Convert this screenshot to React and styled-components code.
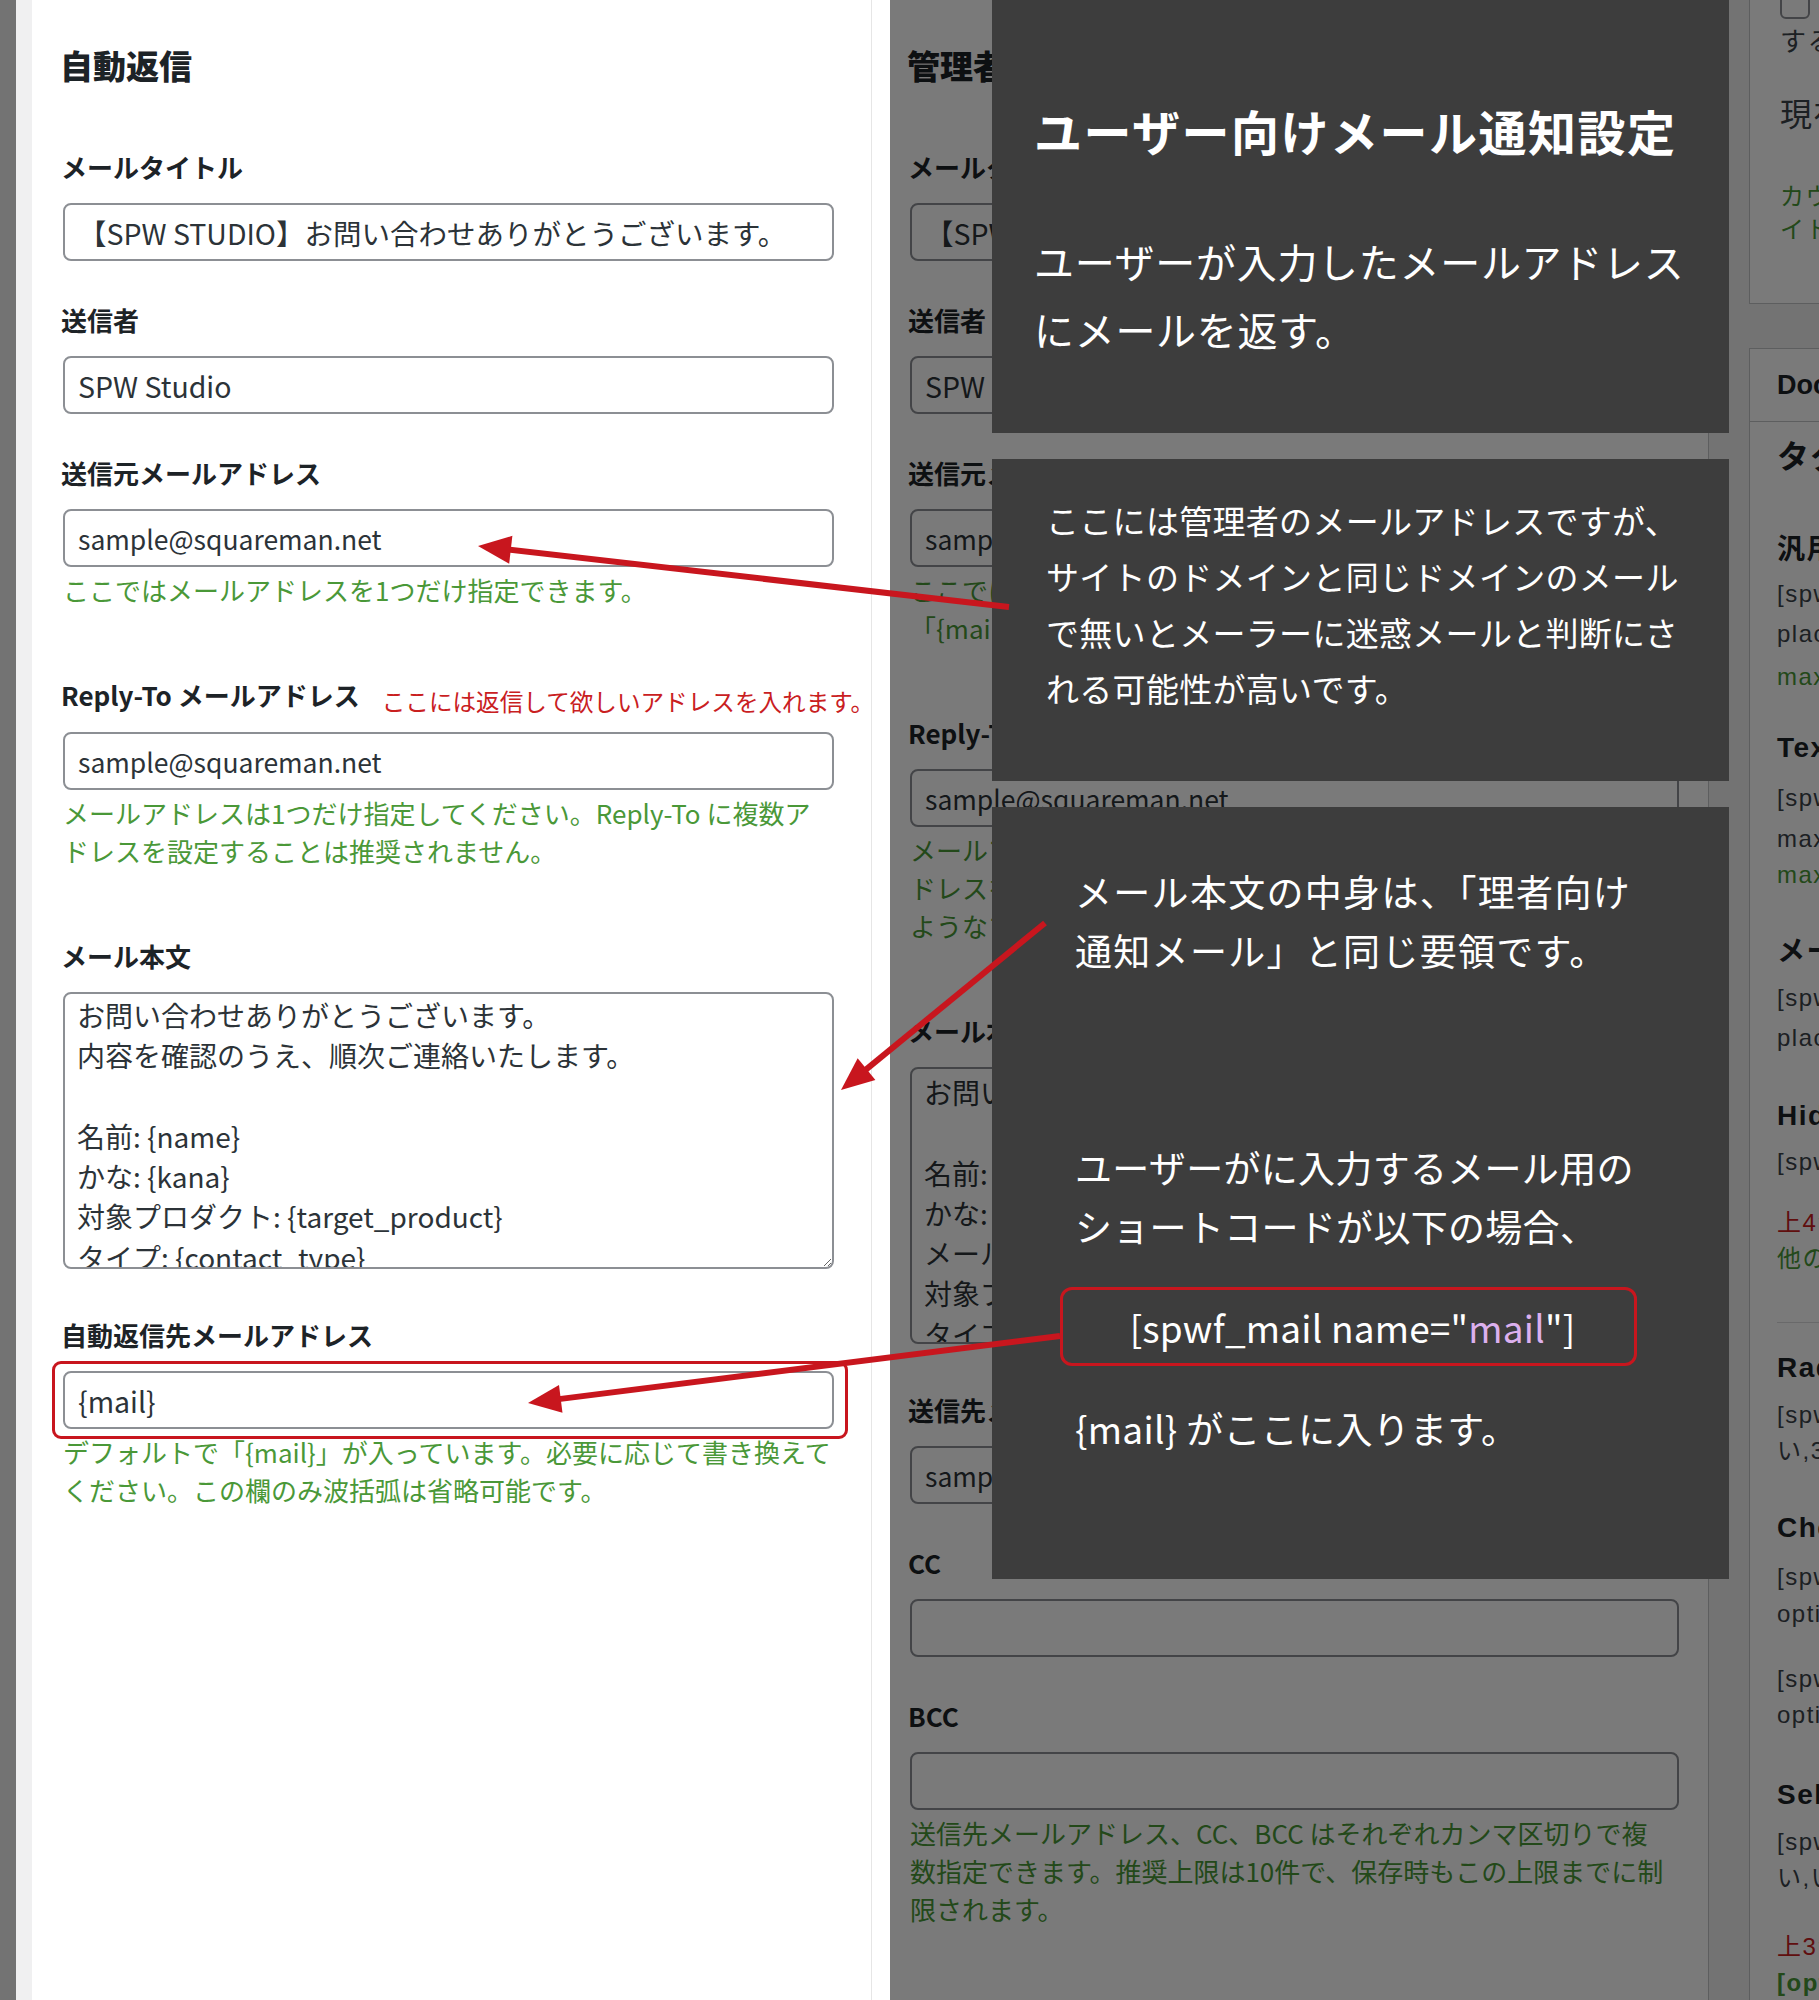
import styled, { createGlobalStyle } from 'styled-components';

const GlobalStyle = createGlobalStyle`
  html, body {
    margin: 0;
    padding: 0;
  }
  body {
    font-family: "Noto Sans CJK JP", "Noto Sans", sans-serif;
    color: #1d2327;
  }
`;

const RED = '#c8161e';
const GREEN = '#4a9838';

const Page = styled.div`
  position: relative;
  width: 1819px;
  height: 2000px;
  overflow: hidden;
  background: #f0f0f1;
  display: flex;
  padding-left: 32px;
  box-sizing: border-box;
`;

const Postbox = styled.div`
  display: flex;
  flex-shrink: 0;
  background: #fff;
  border-right: 1px solid #c3c4c7;
`;

const Column = styled.div`
  box-sizing: border-box;
  width: ${props => props.$width}px;
  padding: 41px ${props => props.$pr}px 0 ${props => props.$pl}px;
  border-right: ${props => (props.$divider ? '1px solid #e6e6e6' : 'none')};
`;

const SectionTitle = styled.h2`
  margin: 0 0 60px -3px;
  font-size: 33px;
  line-height: 48px;
  font-weight: 800;
  color: #1d2327;
`;

const Field = styled.div`
  padding-bottom: 41px;
`;

const LabelRow = styled.div`
  display: flex;
  align-items: baseline;
  gap: 22px;
  margin: 0 0 18px -2px;
`;

const Label = styled.label`
  display: block;
  font-size: 26px;
  line-height: 36px;
  font-weight: 700;
  color: #1d2327;
  white-space: nowrap;
`;

const InlineAlert = styled.span`
  position: relative;
  top: 5px;
  font-size: 23.6px;
  line-height: 36px;
  color: #c9201f;
  white-space: nowrap;
`;

const TextInput = styled.input`
  display: block;
  width: 100%;
  height: 58px;
  box-sizing: border-box;
  padding: 0 13px;
  border: 2px solid #8c8f94;
  border-radius: 8px;
  background: #fff;
  color: #2c3338;
  font-family: inherit;
  font-size: ${props => props.$size || 28.5}px;
  outline: none;
`;

const TextArea = styled.textarea`
  display: block;
  width: 100%;
  height: 277px;
  box-sizing: border-box;
  margin: 0 0 7px;
  padding: ${props => props.$pt || 1}px 12px 0;
  border: 2px solid #8c8f94;
  border-radius: 8px;
  background: #fff;
  color: #2c3338;
  font-family: inherit;
  font-size: 28px;
  line-height: 40.3px;
  overflow: hidden;
  resize: vertical;
  outline: none;
`;

const Note = styled.p`
  margin: 4px 0 27px;
  font-size: 26px;
  line-height: 38px;
  color: ${GREEN};
  white-space: nowrap;
`;

const Highlight = styled.div`
  position: relative;

  &::after {
    content: '';
    position: absolute;
    top: -10px;
    bottom: -10px;
    left: -11px;
    right: -14px;
    border: 3px solid ${RED};
    border-radius: 9px;
    pointer-events: none;
  }
`;

/* サイドバー */

const Sidebar = styled.div`
  flex-shrink: 0;
  width: 520px;
  margin-left: 40px;
  display: flex;
  flex-direction: column;
  gap: 44px;
  font-family: "Liberation Sans", "Noto Sans CJK JP", sans-serif;
`;

const SideBox = styled.div`
  background: #fff;
  border: 1px solid #c3c4c7;
  margin-top: ${props => props.$mt || 0}px;
  padding: ${props => props.$pad};
`;

const Checkbox = styled.div`
  width: 30px;
  height: 30px;
  box-sizing: border-box;
  border: 2px solid #8c8f94;
  border-radius: 6px;
`;

const SideHeader = styled.div`
  height: 72px;
  display: flex;
  align-items: center;
  padding-left: 27px;
  border-bottom: 1px solid #c3c4c7;
  font-size: 27px;
  font-weight: 700;
  color: #1d2327;
`;

const SideBody = styled.div`
  padding: 0 0 40px 27px;
`;

const SideLine = styled.div`
  margin-top: ${props => props.$mt || 0}px;
  font-size: ${props => props.$size || 24}px;
  line-height: ${props => props.$lh || 36}px;
  font-weight: ${props => (props.$bold ? 700 : 400)};
  color: ${props => props.$color || '#3c434a'};
  letter-spacing: 1.5px;
  white-space: nowrap;
`;

const SideRule = styled.hr`
  margin: 45px 30px 0 0;
  border: 0;
  border-top: 1px solid #dcdcde;
`;

/* 注釈レイヤー */

const Dim = styled.div`
  position: absolute;
  top: 0;
  bottom: 0;
  left: ${props => props.$left}px;
  width: ${props => props.$width}px;
  background: rgba(0, 0, 0, 0.52);
`;

const Callout = styled.div`
  position: absolute;
  left: 992px;
  width: 737px;
  top: ${props => props.$top}px;
  height: ${props => props.$height}px;
  box-sizing: border-box;
  padding: ${props => props.$pad};
  background: #3d3d3d;
  color: #fff;
  white-space: nowrap;
`;

const CalloutTitle = styled.div`
  margin-bottom: 68px;
  font-size: 48px;
  line-height: 60px;
  font-weight: 700;
  letter-spacing: 1.5px;
`;

const CalloutText = styled.div`
  margin-top: ${props => props.$mt || 0}px;
  font-size: ${props => props.$size}px;
  line-height: ${props => props.$lh}px;
  letter-spacing: ${props => props.$ls || 0}px;
`;

const Shortcode = styled.div`
  width: 577px;
  height: 79px;
  box-sizing: border-box;
  margin: 31px 0 0 -15px;
  padding-left: 8px;
  border: 3px solid ${RED};
  border-radius: 12px;
  display: flex;
  align-items: center;
  justify-content: center;
  font-size: 37px;
  letter-spacing: 0.2px;

  em {
    font-style: normal;
    color: #dcb0ee;
  }
`;

const ArrowLayer = styled.svg`
  position: absolute;
  top: 0;
  left: 0;
  pointer-events: none;
`;

const arrows = [
  { from: [1009, 607], to: [478, 546] },
  { from: [1045, 923], to: [841, 1090] },
  { from: [1060, 1336], to: [528, 1403] },
];

const Arrow = ({ from, to }) => {
  const [x1, y1] = from;
  const [x2, y2] = to;
  const d = Math.hypot(x2 - x1, y2 - y1);
  const ux = (x2 - x1) / d;
  const uy = (y2 - y1) / d;
  const len = 33;
  const half = 14;
  const bx = x2 - ux * len;
  const by = y2 - uy * len;
  const points = [
    `${x2},${y2}`,
    `${bx - uy * half},${by + ux * half}`,
    `${bx + uy * half},${by - ux * half}`,
  ].join(' ');
  return (
    <g>
      <line x1={x1} y1={y1} x2={bx + ux * 4} y2={by + uy * 4} stroke={RED} strokeWidth="6" />
      <polygon points={points} fill={RED} />
    </g>
  );
};

const autoReplyBody = `お問い合わせありがとうございます。
内容を確認のうえ、順次ご連絡いたします。

名前: {name}
かな: {kana}
対象プロダクト: {target_product}
タイプ: {contact_type}
メッセージ:
{message}`;

const adminBody = `お問い合わせフォームから送信がありました。

名前: {name}
かな: {kana}
メールアドレス: {mail}
対象プロダクト: {target_product}
タイプ: {contact_type}
メッセージ:
{message}`;

const App = () => (
  <>
    <GlobalStyle />
    <Page>
      <Postbox>
        <Column $width={840} $pl={31} $pr={37} $divider>
          <SectionTitle>自動返信</SectionTitle>

          <Field>
            <LabelRow><Label>メールタイトル</Label></LabelRow>
            <TextInput readOnly defaultValue="【SPW STUDIO】お問い合わせありがとうございます。" />
          </Field>

          <Field>
            <LabelRow><Label>送信者</Label></LabelRow>
            <TextInput readOnly defaultValue="SPW Studio" />
          </Field>

          <Field>
            <LabelRow><Label>送信元メールアドレス</Label></LabelRow>
            <TextInput readOnly $size={26.5} defaultValue="sample@squareman.net" />
            <Note>ここではメールアドレスを1つだけ指定できます。</Note>
          </Field>

          <Field>
            <LabelRow>
              <Label>Reply-To メールアドレス</Label>
              <InlineAlert>ここには返信して欲しいアドレスを入れます。</InlineAlert>
            </LabelRow>
            <TextInput readOnly $size={26.5} defaultValue="sample@squareman.net" />
            <Note>
              メールアドレスは1つだけ指定してください。Reply-To に複数ア
              <br />
              ドレスを設定することは推奨されません。
            </Note>
          </Field>

          <Field>
            <LabelRow><Label>メール本文</Label></LabelRow>
            <TextArea readOnly defaultValue={autoReplyBody} />
          </Field>

          <Field>
            <LabelRow><Label>自動返信先メールアドレス</Label></LabelRow>
            <Highlight>
              <TextInput readOnly defaultValue="{mail}" />
            </Highlight>
            <Note>
              デフォルトで「{'{mail}'}」が入っています。必要に応じて書き換えて
              <br />
              ください。この欄のみ波括弧は省略可能です。
            </Note>
          </Field>
        </Column>

        <Column $width={836} $pl={38} $pr={29}>
          <SectionTitle>管理者通知</SectionTitle>

          <Field>
            <LabelRow><Label>メールタイトル</Label></LabelRow>
            <TextInput readOnly defaultValue="【SPW STUDIO】お問い合わせが送信されました。" />
          </Field>

          <Field>
            <LabelRow><Label>送信者</Label></LabelRow>
            <TextInput readOnly defaultValue="SPW Studio" />
          </Field>

          <Field>
            <LabelRow><Label>送信元メールアドレス</Label></LabelRow>
            <TextInput readOnly $size={26.5} defaultValue="sample@squareman.net" />
            <Note>
              ここではメールアドレスを1つだけ指定できます。From には
              <br />
              「{'{mail}'}」のようなプレースホルダは使えません。
            </Note>
          </Field>

          <Field>
            <LabelRow><Label>Reply-To メールアドレス</Label></LabelRow>
            <TextInput readOnly $size={26.5} defaultValue="sample@squareman.net" />
            <Note>
              メールアドレスは1つだけ指定してください。Reply-To に複数ア
              <br />
              ドレスを設定することは推奨されません。「{'{mail}'}」 の
              <br />
              ようなプレースホルダを使えます。
            </Note>
          </Field>

          <Field>
            <LabelRow><Label>メール本文</Label></LabelRow>
            <TextArea readOnly $pt={3} defaultValue={adminBody} />
          </Field>

          <Field>
            <LabelRow><Label>送信先メールアドレス</Label></LabelRow>
            <TextInput readOnly $size={26.5} defaultValue="sample@squareman.net" />
          </Field>

          <Field>
            <LabelRow><Label>CC</Label></LabelRow>
            <TextInput readOnly $size={26.5} defaultValue="" />
          </Field>

          <Field>
            <LabelRow><Label>BCC</Label></LabelRow>
            <TextInput readOnly $size={26.5} defaultValue="" />
            <Note>
              送信先メールアドレス、CC、BCC はそれぞれカンマ区切りで複
              <br />
              数指定できます。推奨上限は10件で、保存時もこの上限までに制
              <br />
              限されます。
            </Note>
          </Field>
        </Column>
      </Postbox>

      <Sidebar>
        <SideBox $mt={-40} $pad="28px 0 57px 30px">
          <Checkbox />
          <SideLine $mt={5} $size={26}>するとカウンターを表示</SideLine>
          <SideLine $mt={33} $size={32} $lh={44}>現在のカウント: 0</SideLine>
          <SideLine $mt={43} $lh={33} $color={GREEN}>カウンターはフォーム送信ごとに</SideLine>
          <SideLine $lh={33} $color={GREEN}>イトの表示に使われます。</SideLine>
        </SideBox>

        <SideBox $pad="0">
          <SideHeader>Documentation</SideHeader>
          <SideBody>
            <SideLine $mt={13} $size={32} $lh={44} $bold $color="#1d2327">タグ一覧</SideLine>
            <SideLine $mt={51} $size={28} $lh={40} $bold $color="#1d2327">汎用テキスト</SideLine>
            <SideLine $mt={6}>[spwf_text name="name"</SideLine>
            <SideLine $mt={4}>placeholder="お名前"]</SideLine>
            <SideLine $mt={7} $color={GREEN}>maxlength="100"</SideLine>
            <SideLine $mt={33} $size={28} $lh={40} $bold $color="#1d2327">Textarea</SideLine>
            <SideLine $mt={12}>[spwf_textarea name="message"</SideLine>
            <SideLine $mt={5}>maxlength="2000"]</SideLine>
            <SideLine $color={GREEN}>maxlength は任意</SideLine>
            <SideLine $mt={39} $size={28} $lh={40} $bold $color="#1d2327">メールアドレス</SideLine>
            <SideLine $mt={8}>[spwf_mail name="mail"</SideLine>
            <SideLine $mt={4}>placeholder="mail@example.com"]</SideLine>
            <SideLine $mt={40} $size={28} $lh={40} $bold $color="#1d2327">Hidden</SideLine>
            <SideLine $mt={8}>[spwf_hidden name="page"]</SideLine>
            <SideLine $mt={25} $color="#c9201f">上4つは必須です。</SideLine>
            <SideLine $color={GREEN}>他のタグは任意です。</SideLine>
            <SideRule />
            <SideLine $mt={25} $size={28} $lh={40} $bold $color="#1d2327">Radio</SideLine>
            <SideLine $mt={9}>[spwf_radio name="type" options="は</SideLine>
            <SideLine>い,3択"]</SideLine>
            <SideLine $mt={39} $size={28} $lh={40} $bold $color="#1d2327">Checkbox</SideLine>
            <SideLine $mt={11}>[spwf_checkbox name="agree"</SideLine>
            <SideLine $mt={1}>options="同意する"]</SideLine>
            <SideLine $mt={29}>[spwf_checkbox name="items"</SideLine>
            <SideLine>options="A,B,C"]</SideLine>
            <SideLine $mt={42} $size={28} $lh={40} $bold $color="#1d2327">Select</SideLine>
            <SideLine $mt={9}>[spwf_select name="product" options="は</SideLine>
            <SideLine>い,いいえ"]</SideLine>
            <SideLine $mt={33} $color="#c9201f">上3つは options が必須です。</SideLine>
            <SideLine $bold $color={GREEN}>[options] はカンマ区切り</SideLine>
          </SideBody>
        </SideBox>
      </Sidebar>

      <Dim $left={0} $width={16} />
      <Dim $left={890} $width={929} />

      <Callout $top={0} $height={433} $pad="100px 0 0 42px">
        <CalloutTitle>ユーザー向けメール通知設定</CalloutTitle>
        <CalloutText $size={40} $lh={67.5} $ls={0.7}>
          ユーザーが入力したメールアドレス
          <br />
          にメールを返す。
        </CalloutText>
      </Callout>

      <Callout $top={459} $height={322} $pad="33px 0 0 54px">
        <CalloutText $size={33} $lh={56} $ls={0.3}>
          ここには管理者のメールアドレスですが、
          <br />
          サイトのドメインと同じドメインのメール
          <br />
          で無いとメーラーに迷惑メールと判断にさ
          <br />
          れる可能性が高いです。
        </CalloutText>
      </Callout>

      <Callout $top={807} $height={772} $pad="55px 0 0 83px">
        <CalloutText $size={37} $lh={59} $ls={1.3}>
          メール本文の中身は、「理者向け
          <br />
          通知メール」と同じ要領です。
        </CalloutText>
        <CalloutText $mt={158} $size={37} $lh={59} $ls={0.3}>
          ユーザーがに入力するメール用の
          <br />
          ショートコードが以下の場合、
        </CalloutText>
        <Shortcode>
          [spwf_mail name="<em>mail</em>"]
        </Shortcode>
        <CalloutText $mt={33} $size={37} $lh={59} $ls={0.3}>
          {'{mail}'} がここに入ります。
        </CalloutText>
      </Callout>

      <ArrowLayer width="1819" height="2000" viewBox="0 0 1819 2000">
        {arrows.map((a, i) => (
          <Arrow key={i} from={a.from} to={a.to} />
        ))}
      </ArrowLayer>
    </Page>
  </>
);

export default App;
